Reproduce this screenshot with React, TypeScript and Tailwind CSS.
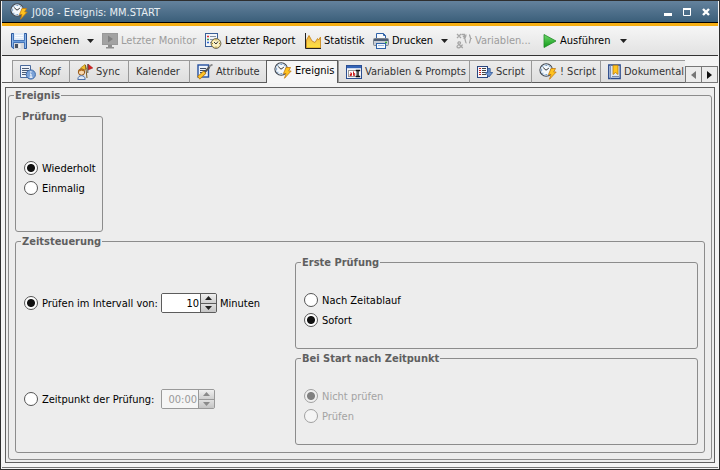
import { useState } from 'react';
import type { ReactNode } from 'react';

function ClockIcon() {
  return (
    <svg width="18" height="17" viewBox="0 0 18 17" className="shrink-0" aria-hidden="true">
      <circle cx="7.2" cy="7" r="6.3" fill="#f4f8fc" stroke="#3f4650" strokeWidth="1.1" />
      <circle cx="7.2" cy="7" r="5" fill="none" stroke="#b9cfe4" strokeWidth=".8" />
      <path d="M7.2 1.8v1.2M7.2 11v1.2M2 7h1.2M11.2 7h1.2M3.6 3.4l.7.7M10.8 3.4l-.7.7M3.6 10.6l.7-.7" stroke="#4a7fb5" strokeWidth="1" />
      <path d="M4.200 4.600L7 7.200L9.800 5.200" fill="none" stroke="#333" strokeWidth="1" />
      <path d="M12 5.500h4.500l-1.800 3.500h2.500L10.500 16.300l1.500-4.800H9.500z" fill="#ffc31e" stroke="#c07812" strokeWidth=".8" />
    </svg>
  );
}

function SaveIcon() {
  return (
    <svg width="16" height="16" viewBox="0 0 16 16" className="shrink-0" aria-hidden="true">
      <path d="M.5.5h15v15H2.2L.5 13.8z" fill="#6c9edc" stroke="#2c5698" />
      <path d="M1.500 1v12M14.500 1v14" stroke="#8db6ea" />
      <rect x="3" y="0" width="10" height="7" fill="#dfeaf7" />
      <path d="M4 2.500h8M4 4.500h8" stroke="#f8fbff" />
      <path d="M2.500 0v7.500h11V0" fill="none" stroke="#4474b8" />
      <rect x="3" y="10" width="10" height="6" fill="#d4d7dc" />
      <rect x="4" y="11" width="3" height="4" fill="#4a5260" />
      <path d="M8.500 11v4" stroke="#f4f4f4" strokeWidth="2" />
      <path d="M2.500 15.500V9.500h11v6" fill="none" stroke="#4474b8" />
    </svg>
  );
}

function MonitorIcon() {
  return (
    <svg width="16" height="16" viewBox="0 0 16 16" className="shrink-0" aria-hidden="true">
      <rect x=".5" y=".5" width="15" height="11" fill="#a2a2a2" stroke="#999" />
      <path d="M6 2.500l5 3.500l-5 3.500z" fill="#808080" />
      <path d="M6 12h4v2h2v1.500H4V14h2z" fill="#8e8e8e" />
    </svg>
  );
}

function ReportIcon() {
  return (
    <svg width="17" height="16" viewBox="0 0 17 16" className="shrink-0" aria-hidden="true">
      <rect x=".5" y=".5" width="12" height="13" fill="#f3f6fa" stroke="#3a5f98" />
      <path d="M5 3.500h6M5 6.500h4M5 9.500h2" stroke="#8492a6" />
      <path d="M2 3.500h2" stroke="#d33" strokeWidth="1.5" />
      <path d="M2 6.500h2" stroke="#3a9a3a" strokeWidth="1.5" />
      <path d="M2 9.500h2" stroke="#36c" strokeWidth="1.5" />
      <circle cx="11" cy="10.500" r="4.900" fill="#f2dd8c" stroke="#6a6654" />
      <circle cx="11" cy="10.500" r="3.600" fill="#faf2c8" />
      <path d="M9 9l2 2l2-2.500" fill="none" stroke="#333" />
      <path d="M11 6.500v1M11 13.500v1M7 10.500h1M14 10.500h1" stroke="#a08530" />
    </svg>
  );
}

function ChartIcon() {
  return (
    <svg width="16" height="16" viewBox="0 0 16 16" className="shrink-0" aria-hidden="true">
      <defs>
        <linearGradient id="area" x1="0" y1="0" x2="0" y2="1">
          <stop offset="0" stopColor="#f0a838" />
          <stop offset=".5" stopColor="#f6cf4c" />
          <stop offset="1" stopColor="#ffe23c" />
        </linearGradient>
      </defs>
      <path d="M1.500 7l2.500-4.500l3 5.500l3 1.500l2.500-4l1 1.500l2-3V15h-14z" fill="url(#area)" stroke="#c98a20" strokeWidth=".9" />
      <path d="M.5 0v15.500H16" fill="none" stroke="#222" />
    </svg>
  );
}

function PrinterIcon() {
  return (
    <svg width="16" height="16" viewBox="0 0 16 16" className="shrink-0" aria-hidden="true">
      <path d="M3.500 6V.5h7l2 2V6" fill="#f6f9fd" stroke="#2f62a8" />
      <path d="M10.500.5v2h2" fill="none" stroke="#2f62a8" />
      <rect x=".5" y="5.500" width="15" height="7" rx="1" fill="#c6ccd4" stroke="#7d858f" />
      <path d="M1 7h14" stroke="#4c5c74" strokeWidth="2" />
      <path d="M12 9.500h2" stroke="#37b137" strokeWidth="1.400" />
      <rect x="3.500" y="10.500" width="9" height="5" fill="#f4f8fd" stroke="#2f62a8" />
      <path d="M5 12.500h6" stroke="#9db8dc" />
    </svg>
  );
}

function VariablesIcon() {
  return (
    <svg width="16" height="16" viewBox="0 0 16 16" className="shrink-0" fill="none" stroke="#a6a6a6" strokeWidth="1.3" aria-hidden="true">
      <path d="M1 1l4 4M5 1L1 5M5.500 1.500h3v3M7 3l1.500 1.500l1.500-1.500" />
      <path d="M10.500 2c-1.500 0-.8 3-2 3.500c1.200.5.5 4.500 2 4.500M13 2c1.500 0 .8 3 2 3.500c-1.200.5-.5 4.500-2 4.500" />
      <path d="M6.800 15L2 10.500c-.8-1.500 2.500-2.500 2.500-.5C4.500 11.500 1 12 1 13.500c0 2 4 2 5.500-2" />
    </svg>
  );
}

function RunIcon() {
  return (
    <svg width="14" height="16" viewBox="0 0 14 16" className="shrink-0" aria-hidden="true">
      <defs>
        <linearGradient id="run" x1="0" y1="0" x2="0" y2="1">
          <stop offset="0" stopColor="#6fd86a" />
          <stop offset="1" stopColor="#0f9a18" />
        </linearGradient>
      </defs>
      <path d="M1 1.500L13 8L1 14.500z" fill="url(#run)" stroke="#1f8a26" strokeWidth=".8" />
    </svg>
  );
}

function HeaderIcon() {
  return (
    <svg width="16" height="16" viewBox="0 0 16 16" className="shrink-0" aria-hidden="true">
      <path d="M.5 1.500h10v12H.5z" fill="#eef3fa" stroke="#4b6a9c" />
      <path d="M2 4.500h7M2 6.500h7M2 8.500h5M2 10.500h4" stroke="#4c5c76" />
      <circle cx="10.800" cy="10.500" r="4.600" fill="#7ba3d8" stroke="#3a68a8" />
      <path d="M10 10h1v3.500M9.500 13.200h3" fill="none" stroke="#fff" />
      <path d="M10.200 7.800h1.300" stroke="#fff" strokeWidth="1.2" />
    </svg>
  );
}

function SyncIcon() {
  return (
    <svg width="16" height="16" viewBox="0 0 16 16" className="shrink-0" aria-hidden="true">
      <path d="M3.500 4L8 .5L9.500 5L5 6z" fill="#f0c02c" stroke="#a87a14" strokeWidth=".7" />
      <path d="M8.500 1l1.500 13" stroke="#7a5a20" />
      <path d="M11 0l4.800 4L11 6z" fill="#d82020" stroke="#961010" strokeWidth=".5" />
      <path d="M10.800 0v9" stroke="#555" />
      <circle cx="4.500" cy="8" r="3.200" fill="#f8d9b0" stroke="#94581c" />
      <path d="M1.200 7.500c.5-3.800 6-3.800 6.500 0c-2-.2-3-.8-3.500-1c-.5.700-1.700 1-3 1z" fill="#b06c1e" />
      <path d="M.8 15.500c.2-3 1.800-3.800 3.700-3.800s3.500.8 3.700 3.800z" fill="#dfe9f7" stroke="#3c64a0" strokeWidth=".9" />
    </svg>
  );
}

function AttributeIcon() {
  return (
    <svg width="16" height="16" viewBox="0 0 16 16" className="shrink-0" aria-hidden="true">
      <rect x="1" y="1" width="10.500" height="12" fill="#edf3fb" stroke="#2450a0" strokeWidth="1.400" />
      <path d="M3 4.500h6M3 6.500h6M3 8.500h4" stroke="#3c4c66" />
      <path d="M12.500 3L7 9" stroke="#555" strokeWidth="2" />
      <path d="M15.500.5l-3.500 2" stroke="#888" strokeWidth="1.800" />
      <path d="M8 8L1.500 14" stroke="#b57710" strokeWidth="4" />
      <path d="M7.600 8.400L2 13.500" stroke="#ffc62a" strokeWidth="2.600" />
    </svg>
  );
}

function PromptIcon() {
  return (
    <svg width="16" height="14" viewBox="0 0 16 14" className="shrink-0" aria-hidden="true">
      <rect x=".5" y=".5" width="15" height="13" fill="#f4f6fa" stroke="#2a4d90" />
      <path d="M1 2h14" stroke="#3565b8" strokeWidth="2.400" />
      <rect x="2.500" y="5.500" width="8" height="6" fill="#fff" stroke="#999" />
      <path d="M4 8h1.500v2.500H4V9.500h1.500M7.500 6.500v4h1.200V8.500H7.500" fill="none" stroke="#c22" />
      <path d="M9.800 5.500h4.400M12 5.500v6M9.800 11.500h4.400" fill="none" stroke="#111" strokeWidth="1.400" />
    </svg>
  );
}

function ScriptIcon() {
  return (
    <svg width="16" height="16" viewBox="0 0 16 16" className="shrink-0" aria-hidden="true">
      <rect x=".5" y="2.500" width="10" height="11" fill="#f7f8fb" stroke="#2a4680" />
      <path d="M2 4.500h2M2 6.500h2M2 8.500h2M2 10.500h2" stroke="#c22" />
      <path d="M5 4.500h4M5 6.500h4M5 8.500h4M5 10.500h4" stroke="#444" />
      <path d="M10.800 4.500h2.400v4h2.500l-3.700 4.500l-3.700-4.500h2.500z" fill="#6d94d0" stroke="#2e5596" strokeWidth=".8" />
    </svg>
  );
}

function BookIcon() {
  return (
    <svg width="13" height="16" viewBox="0 0 13 16" className="shrink-0" aria-hidden="true">
      <path d="M.7 1h11.500v13.500H.7z" fill="#dce6f5" stroke="#2c4c8c" strokeWidth="1.300" />
      <path d="M2.500 1.500v13" stroke="#7c94c0" />
      <path d="M4 12.500h7" stroke="#7d8da8" />
      <path d="M5 1.200h5V10.500L7.500 8.500L5 10.500z" fill="#ffc41e" stroke="#b87c10" strokeWidth=".8" />
    </svg>
  );
}

function DropArrow() {
  return (
    <svg width="7" height="4" viewBox="0 0 7 4" className="mt-px shrink-0" aria-hidden="true">
      <path d="M0 0h7L3.500 4z" fill="#222" />
    </svg>
  );
}

const tools = [
  { label: 'Speichern', icon: <SaveIcon />, width: 'w-[91px]', menu: true, disabled: false },
  { label: 'Letzter Monitor', icon: <MonitorIcon />, width: 'w-[103px]', menu: false, disabled: true },
  { label: 'Letzter Report', icon: <ReportIcon />, width: 'w-[100px]', menu: false, disabled: false },
  { label: 'Statistik', icon: <ChartIcon />, width: 'w-[68px]', menu: false, disabled: false },
  { label: 'Drucken', icon: <PrinterIcon />, width: 'w-[83px]', menu: true, disabled: false },
  { label: 'Variablen...', icon: <VariablesIcon />, width: 'w-[87px]', menu: false, disabled: true },
  { label: 'Ausführen', icon: <RunIcon />, width: 'w-[92px]', menu: true, disabled: false },
];

const tabs = [
  { label: 'Kopf', icon: <HeaderIcon />, width: 'w-[57px]' },
  { label: 'Sync', icon: <SyncIcon />, width: 'w-[59px]' },
  { label: 'Kalender', icon: null, width: 'w-[61px]' },
  { label: 'Attribute', icon: <AttributeIcon />, width: 'w-[77px]' },
  { label: 'Ereignis', icon: <ClockIcon />, width: 'w-[72px]' },
  { label: 'Variablen & Prompts', icon: <PromptIcon />, width: 'w-[131px]' },
  { label: 'Script', icon: <ScriptIcon />, width: 'w-[62px]' },
  { label: '! Script', icon: <ClockIcon />, width: 'w-[69px]' },
  { label: 'Dokumental', icon: <BookIcon />, width: 'w-[86px]' },
];

function Group({ title, className = '', children }: { title: string; className?: string; children: ReactNode }) {
  return (
    <fieldset className={`min-w-0 rounded-[3px] border border-[#8c8c8c] ${className}`}>
      <legend className="ml-[5px] px-px font-bold leading-[15px] text-[#5f5f5f]">{title}</legend>
      {children}
    </fieldset>
  );
}

type RadioProps = {
  name: string;
  label: string;
  checked: boolean;
  onChange?: () => void;
  disabled?: boolean;
};

function Radio({ name, label, checked, onChange, disabled }: RadioProps) {
  return (
    <label className={`flex h-5 items-center gap-1 whitespace-nowrap ${disabled ? 'text-[#a3a3a3]' : ''}`}>
      <input
        type="radio"
        name={name}
        checked={checked}
        onChange={onChange ?? (() => {})}
        disabled={disabled}
        className="size-[14px] shrink-0 appearance-none rounded-full border border-[#555] bg-white checked:bg-[radial-gradient(circle,#111_3.5px,#fff_4.5px)] disabled:border-[#a0a0a0] disabled:bg-[#f5f5f5] disabled:checked:bg-[radial-gradient(circle,#808080_3.5px,#f0f0f0_4.5px)]"
      />
      {label}
    </label>
  );
}

type SpinnerProps = {
  label: string;
  value: string;
  width: string;
  disabled?: boolean;
  onChange?: (v: string) => void;
  onStep?: (n: number) => void;
};

function Spinner({ label, value, width, disabled, onChange, onStep }: SpinnerProps) {
  const line = disabled ? 'border-[#999]' : 'border-[#5c5c5c]';
  const arrow = disabled ? '#8a8a8a' : '#222';
  return (
    <div className={`flex h-5 overflow-hidden rounded-xs border ${line} ${width}`}>
      <input
        type="text"
        aria-label={label}
        value={value}
        onChange={(e) => onChange?.(e.target.value)}
        disabled={disabled}
        className="min-w-0 flex-1 bg-white pr-px text-right disabled:bg-[#f5f5f5] disabled:text-[#999]"
      />
      <div className={`flex w-4 flex-col border-l ${line}`}>
        <button
          type="button"
          aria-label={`${label} erhöhen`}
          disabled={disabled}
          onClick={() => onStep?.(1)}
          className={`flex flex-1 items-center justify-center border-b bg-linear-to-b from-[#f0f0f0] to-[#d0d0d0] ${line}`}
        >
          <svg width="7" height="4" viewBox="0 0 7 4"><path d="M3.500 0L7 4H0z" fill={arrow} /></svg>
        </button>
        <button
          type="button"
          aria-label={`${label} verringern`}
          disabled={disabled}
          onClick={() => onStep?.(-1)}
          className="flex flex-1 items-center justify-center bg-linear-to-b from-[#e0e0e0] to-[#c4c4c4]"
        >
          <svg width="7" height="4" viewBox="0 0 7 4"><path d="M0 0h7L3.500 4z" fill={arrow} /></svg>
        </button>
      </div>
    </div>
  );
}

export default function App() {
  const [activeTab, setActiveTab] = useState('Ereignis');
  const [check, setCheck] = useState('Wiederholt');
  const [timing, setTiming] = useState('interval');
  const [first, setFirst] = useState('Sofort');
  const [minutes, setMinutes] = useState('10');

  return (
    <div className="flex min-h-screen flex-col border border-[#2e2e2e] bg-[#f4f4f4] px-px font-['DejaVu_Sans_Condensed','DejaVu_Sans',sans-serif] text-[11px] leading-[15px] text-black">
      {/* Title bar */}
      <header className="flex h-[22px] items-center border-b border-black bg-linear-to-b from-[#64829d] to-[#3b5f7a] pl-2 pr-[6px] text-[#e8eef3]">
        <ClockIcon />
        <h1 className="flex-1 pl-1 pt-[2px]">J008 - Ereignis: MM.START</h1>
        <div className="flex gap-[7px]">
          <button type="button" aria-label="Minimieren" className="size-3">
            <svg width="12" height="12" viewBox="0 0 12 12"><path d="M2 8.500h8" stroke="#fff" strokeWidth="3" /></svg>
          </button>
          <button type="button" aria-label="Maximieren" className="size-3">
            <svg width="12" height="12" viewBox="0 0 12 12"><path d="M2.500 3.500h7v6h-7z" fill="none" stroke="#fff" /><path d="M2 3h8" stroke="#fff" strokeWidth="2" /></svg>
          </button>
          <button type="button" aria-label="Schließen" className="size-3">
            <svg width="12" height="12" viewBox="0 0 12 12"><path d="M3 3l6 6M9 3L3 9" stroke="#fff" strokeWidth="2.400" /></svg>
          </button>
        </div>
      </header>
      <div className="h-[3px] bg-[#f5ae13]" />

      {/* Toolbar */}
      <div className="flex h-[30px] items-center overflow-hidden border-b border-[#333] bg-linear-to-b from-[#f6f6f6] to-[#e2e2e2] pl-[9px]">
        {tools.map((tool) => (
          <button
            key={tool.label}
            type="button"
            disabled={tool.disabled}
            className={`flex shrink-0 items-center gap-[3px] whitespace-nowrap disabled:text-[#9c9c9c] ${tool.width}`}
          >
            {tool.icon}
            <span>{tool.label}</span>
            {tool.menu && <span className="flex flex-1 justify-end pr-2"><DropArrow /></span>}
          </button>
        ))}
      </div>

      {/* Tabs */}
      <div className="flex items-end pt-1">
        <div role="tablist" className="flex h-[23px] min-w-0 flex-1 overflow-hidden">
          <div className="w-[10px] shrink-0 border-b border-[#5c5c5c]" />
          {tabs.map((tab) => (
            <button
              key={tab.label}
              type="button"
              role="tab"
              aria-selected={activeTab === tab.label}
              onClick={() => setActiveTab(tab.label)}
              className={`flex shrink-0 items-center gap-[3px] whitespace-nowrap border-l border-t pl-[7px] ${tab.width} ${
                activeTab === tab.label
                  ? 'border-r border-[#5c5c5c] bg-[#f6f6f6] pb-1 text-black'
                  : 'border-b border-t-[#999] border-r-[#999] border-b-[#5c5c5c] border-l-[#999] bg-linear-to-b from-[#ececec] to-[#dedede] text-[#333]'
              }`}
            >
              {tab.icon}
              <span>{tab.label}</span>
            </button>
          ))}
        </div>
        <div className="flex">
          <button type="button" aria-label="Zurück" className="flex size-[17px] items-center justify-center border border-[#777] bg-[#ececec]">
            <svg width="5" height="8" viewBox="0 0 5 8"><path d="M5 0v8L0 4z" fill="#777" /></svg>
          </button>
          <button type="button" aria-label="Weiter" className="-ml-px flex size-[17px] items-center justify-center border border-[#777] bg-[#ececec]">
            <svg width="5" height="8" viewBox="0 0 5 8"><path d="M0 0v8l5-4z" fill="#111" /></svg>
          </button>
        </div>
      </div>

      {/* Event page */}
      <main className="mx-[3px] my-1 flex-1 border border-[#5f5f5f] bg-[#ededed] px-[2px] pb-[2px]">
        <Group title="Ereignis">
          <div className="flex flex-col gap-[2px] p-[6px]">
            <Group title="Prüfung" className="w-[88px]">
              <div className="pb-[33px] pl-2 pt-[34px]">
                {['Wiederholt', 'Einmalig'].map((v) => (
                  <Radio key={v} name="check" label={v} checked={check === v} onChange={() => setCheck(v)} />
                ))}
              </div>
            </Group>

            <Group title="Zeitsteuerung">
              <div className="grid grid-cols-[271px_minmax(0,1fr)] items-center gap-y-[2px] pb-[7px] pl-2 pr-[6px] pt-[6px]">
                <div className="flex items-center pt-[2px]">
                  <div className="w-[137px]">
                    <Radio name="timing" label="Prüfen im Intervall von:" checked={timing === 'interval'} onChange={() => setTiming('interval')} />
                  </div>
                  <Spinner
                    label="Minuten"
                    value={minutes}
                    width="w-[56px]"
                    onChange={setMinutes}
                    onStep={(n) => setMinutes(String(Math.max(1, Number(minutes) + n)))}
                  />
                  <span className="pl-[3px]">Minuten</span>
                </div>
                <Group title="Erste Prüfung">
                  <div className="pb-[18px] pl-2 pt-5">
                    {['Nach Zeitablauf', 'Sofort'].map((v) => (
                      <Radio key={v} name="first" label={v} checked={first === v} onChange={() => setFirst(v)} />
                    ))}
                  </div>
                </Group>

                <div className="flex items-center pt-[2px]">
                  <div className="w-[137px]">
                    <Radio name="timing" label="Zeitpunkt der Prüfung:" checked={timing === 'time'} onChange={() => setTiming('time')} />
                  </div>
                  <Spinner label="Zeitpunkt" value="00:00" width="w-[54px]" disabled />
                </div>
                <Group title="Bei Start nach Zeitpunkt">
                  <div className="pb-[18px] pl-2 pt-5">
                    <Radio name="start" label="Nicht prüfen" checked disabled />
                    <Radio name="start" label="Prüfen" checked={false} disabled />
                  </div>
                </Group>
              </div>
            </Group>
          </div>
        </Group>
      </main>
      <div className="mb-px h-px bg-[#777]" />
    </div>
  );
}
